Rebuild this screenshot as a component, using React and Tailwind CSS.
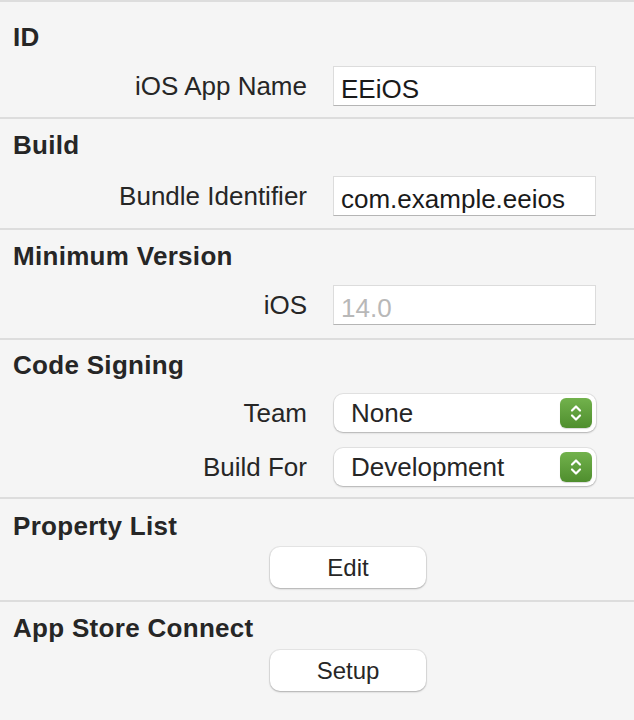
import React from "react";

function Header({ children }) {
  return (
    <div className="pl-[13px] text-[26px] font-bold leading-[30px] tracking-[0.3px] text-[#262626]">
      {children}
    </div>
  );
}

function Label({ children }) {
  return (
    <div className="text-right text-[26px] leading-[40px] text-[#262626] whitespace-nowrap">
      {children}
    </div>
  );
}

function TextField({ value, placeholder }) {
  return (
    <div className="h-[40px] bg-white border border-[#dcdcdc] border-b-[#b5b5b5] pl-[7px] pt-[5px] text-[26px] leading-[34px] whitespace-nowrap overflow-hidden">
      {value ? (
        <span className="text-[#1a1a1a]">{value}</span>
      ) : (
        <span className="text-[#b8b8b8]">{placeholder}</span>
      )}
    </div>
  );
}

function Stepper() {
  return (
    <div className="w-[32px] h-[30px] rounded-[6px] bg-gradient-to-b from-[#72b24c] to-[#4f8e2e] shadow-[0_1px_1px_rgba(0,0,0,0.15)] flex items-center justify-center">
      <svg width="32" height="30" viewBox="0 0 32 30">
        <path d="M12 12.5 L16 8.5 L20 12.5" fill="none" stroke="white" strokeWidth="2.2" strokeLinecap="round" strokeLinejoin="round" />
        <path d="M12 17.5 L16 21.5 L20 17.5" fill="none" stroke="white" strokeWidth="2.2" strokeLinecap="round" strokeLinejoin="round" />
      </svg>
    </div>
  );
}

function Popup({ value }) {
  return (
    <div className="h-[38px] ml-[1px] bg-white rounded-[9px] shadow-[0_0_0_1px_rgba(0,0,0,0.07),0_1px_2px_rgba(0,0,0,0.22)] flex items-center pl-[17px] pr-[4px]">
      <span className="flex-1 text-[26px] leading-[30px] text-[#262626]">{value}</span>
      <Stepper />
    </div>
  );
}

function Button({ children }) {
  return (
    <div className="ml-[270px] w-[156px] h-[41px] bg-white rounded-[10px] shadow-[0_0_0_1px_rgba(0,0,0,0.06),0_1px_2px_rgba(0,0,0,0.25)] flex items-center justify-center text-[24px] text-[#262626]">
      {children}
    </div>
  );
}

function Row({ label, children }) {
  return (
    <div className="grid grid-cols-[307px_263px] gap-x-[26px] items-center">
      <Label>{label}</Label>
      <div>{children}</div>
    </div>
  );
}

export default function App() {
  return (
    <div className="w-full h-[720px] bg-[#f5f5f5] font-['Liberation_Sans',Arial,sans-serif] overflow-hidden">
      <div className="border-t-2 border-[#dddddd] pt-[20px] pb-[11px]">
        <Header>ID</Header>
        <div className="mt-[14px]">
          <Row label="iOS App Name">
            <TextField value="EEiOS" />
          </Row>
        </div>
      </div>

      <div className="border-t-2 border-[#dddddd] pt-[11px] pb-[12px]">
        <Header>Build</Header>
        <div className="mt-[16px]">
          <Row label="Bundle Identifier">
            <TextField value="com.example.eeios" />
          </Row>
        </div>
      </div>

      <div className="border-t-2 border-[#dddddd] pt-[11px] pb-[13px]">
        <Header>Minimum Version</Header>
        <div className="mt-[14px]">
          <Row label="iOS">
            <TextField placeholder="14.0" />
          </Row>
        </div>
      </div>

      <div className="border-t-2 border-[#dddddd] pt-[10px] pb-[10px]">
        <Header>Code Signing</Header>
        <div className="mt-[13px] flex flex-col gap-[14px]">
          <Row label="Team">
            <Popup value="None" />
          </Row>
          <Row label="Build For">
            <Popup value="Development" />
          </Row>
        </div>
      </div>

      <div className="border-t-2 border-[#dddddd] pt-[12px] pb-[12px]">
        <Header>Property List</Header>
        <div className="mt-[6px]">
          <Button>Edit</Button>
        </div>
      </div>

      <div className="border-t-2 border-[#dddddd] pt-[11px]">
        <Header>App Store Connect</Header>
        <div className="mt-[7px]">
          <Button>Setup</Button>
        </div>
      </div>
    </div>
  );
}
